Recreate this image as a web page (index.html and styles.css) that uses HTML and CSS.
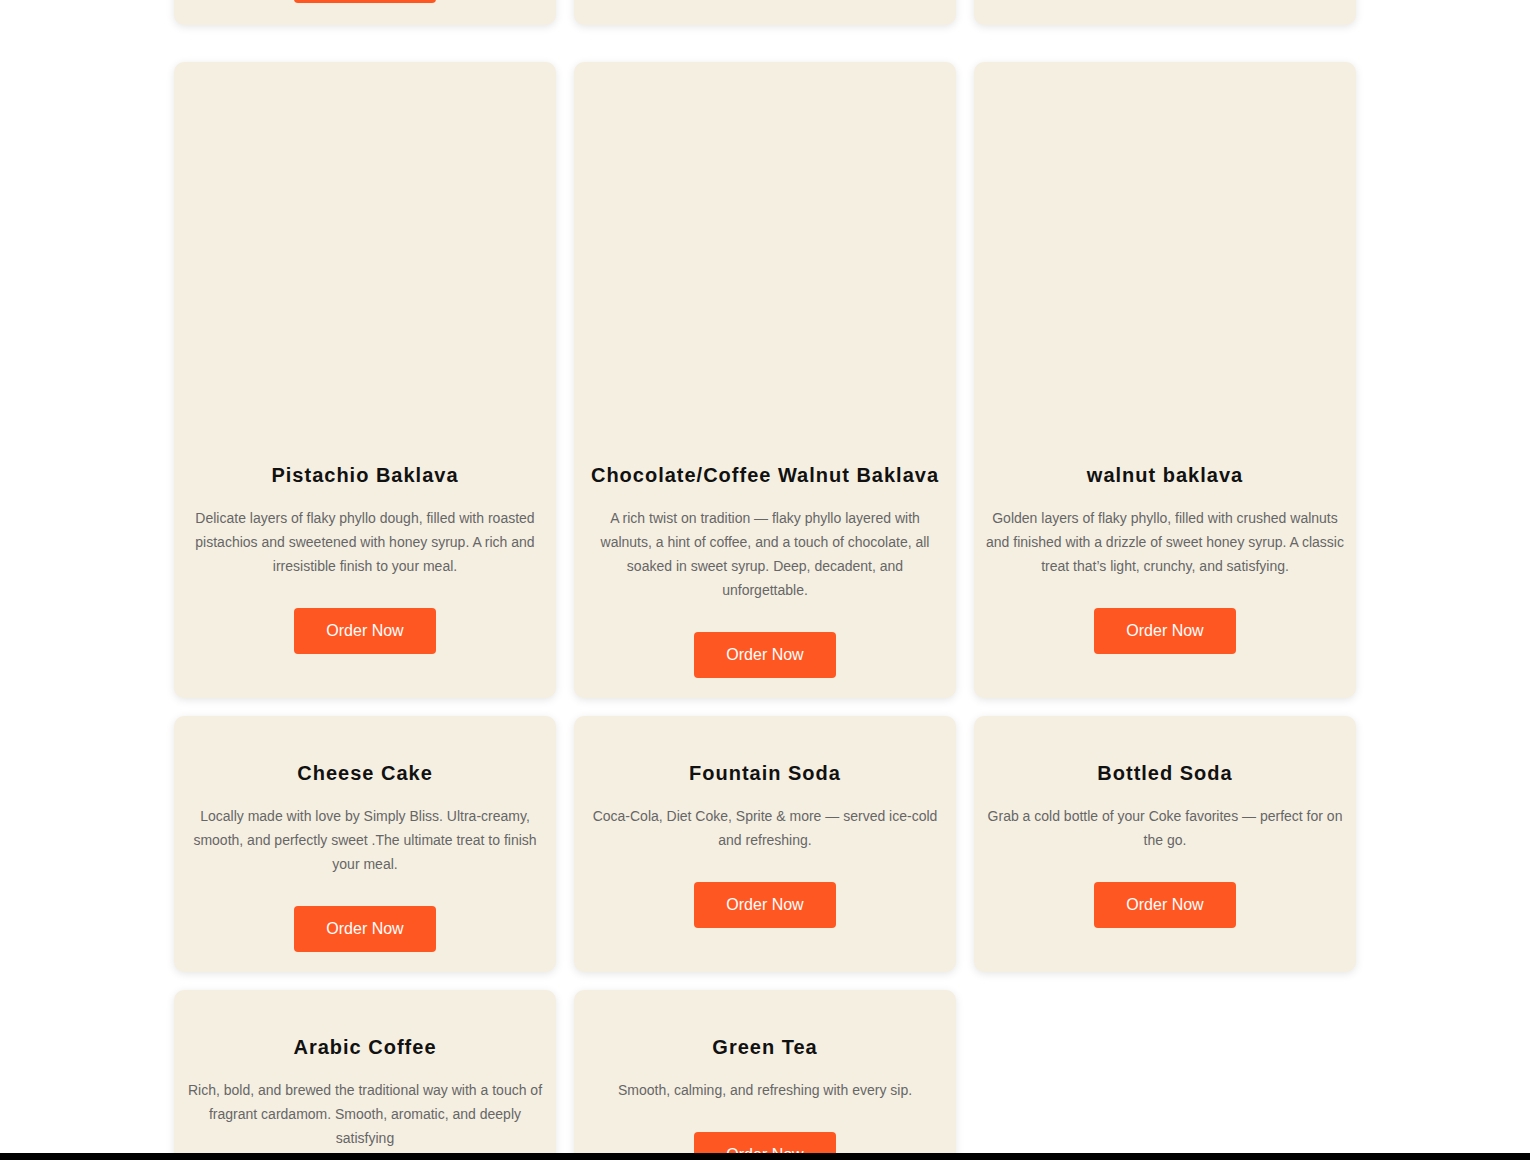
FILE: index.html
```html
<!DOCTYPE html>
<html lang="en">

<head>
    <meta charset="UTF-8">
    <title>Menu</title>
    <link rel="stylesheet" href="styles.css">
</head>

<body>
    <div class="menu">
        <!-- previous section, scrolled mostly out of view -->
        <section class="menu-grid prev">
            <div class="card">
                <button class="order-btn">Order Now</button>
            </div>
            <div class="card"></div>
            <div class="card"></div>
        </section>

        <section class="menu-grid">
            <div class="card">
                <div class="card-img"></div>
                <h3>Pistachio Baklava</h3>
                <p>Delicate layers of flaky phyllo dough, filled with roasted pistachios and sweetened with honey syrup. A rich and irresistible finish to your meal.</p>
                <button class="order-btn">Order Now</button>
            </div>
            <div class="card">
                <div class="card-img"></div>
                <h3>Chocolate/Coffee Walnut Baklava</h3>
                <p>A rich twist on tradition — flaky phyllo layered with walnuts, a hint of coffee, and a touch of chocolate, all soaked in sweet syrup. Deep, decadent, and unforgettable.</p>
                <button class="order-btn">Order Now</button>
            </div>
            <div class="card">
                <div class="card-img"></div>
                <h3>walnut baklava</h3>
                <p>Golden layers of flaky phyllo, filled with crushed walnuts and finished with a drizzle of sweet honey syrup. A classic treat that’s light, crunchy, and satisfying.</p>
                <button class="order-btn">Order Now</button>
            </div>

            <div class="card">
                <h3>Cheese Cake</h3>
                <p>Locally made with love by Simply Bliss. Ultra-creamy, smooth, and perfectly sweet .The ultimate treat to finish your meal.</p>
                <button class="order-btn">Order Now</button>
            </div>
            <div class="card">
                <h3>Fountain Soda</h3>
                <p>Coca-Cola, Diet Coke, Sprite &amp; more — served ice-cold and refreshing.</p>
                <button class="order-btn">Order Now</button>
            </div>
            <div class="card">
                <h3>Bottled Soda</h3>
                <p>Grab a cold bottle of your Coke favorites — perfect for on the go.</p>
                <button class="order-btn">Order Now</button>
            </div>

            <div class="card">
                <h3>Arabic Coffee</h3>
                <p>Rich, bold, and brewed the traditional way with a touch of fragrant cardamom. Smooth, aromatic, and deeply satisfying</p>
                <button class="order-btn">Order Now</button>
            </div>
            <div class="card">
                <h3>Green Tea</h3>
                <p>Smooth, calming, and refreshing with every sip.</p>
                <button class="order-btn">Order Now</button>
            </div>
        </section>
    </div>

    <div class="bottom-bar"></div>
</body>

</html>
```

FILE: styles.css
```css
body {
    margin: 0;
    font-family: "Liberation Sans", Arial, sans-serif;
    background: #ffffff;
    overflow: hidden;
}

.menu {
    max-width: 1182px;
    margin: 0 auto;
}

.menu-grid {
    display: grid;
    grid-template-columns: repeat(3, 1fr);
    gap: 18px;
    margin-bottom: 37px;
}

.menu-grid.prev {
    margin-top: -63px;
}

.card {
    background: #f5efe2;
    border-radius: 10px;
    box-shadow: 0 2px 8px rgba(0, 0, 0, 0.1);
    padding: 20px 10px;
    text-align: center;
}

.menu-grid.prev .card {
    padding: 20px 10px 22px;
}

.card-img {
    height: 356px;
}

.card h3 {
    font-size: 20px;
    letter-spacing: 1px;
    color: #111;
    margin: 26px 0 19px;
}

.card p {
    font-size: 14px;
    line-height: 24px;
    color: #666;
    margin: 0;
}

.order-btn {
    margin-top: 30px;
    padding: 14px 32px;
    border: none;
    border-radius: 4px;
    background: #ff5722;
    color: white;
    font-family: inherit;
    font-size: 16px;
    cursor: pointer;
}

.menu-grid.prev .order-btn {
    margin-top: 0;
}

.bottom-bar {
    position: fixed;
    left: 0;
    right: 0;
    bottom: 0;
    height: 7px;
    background: #000;
}
```
